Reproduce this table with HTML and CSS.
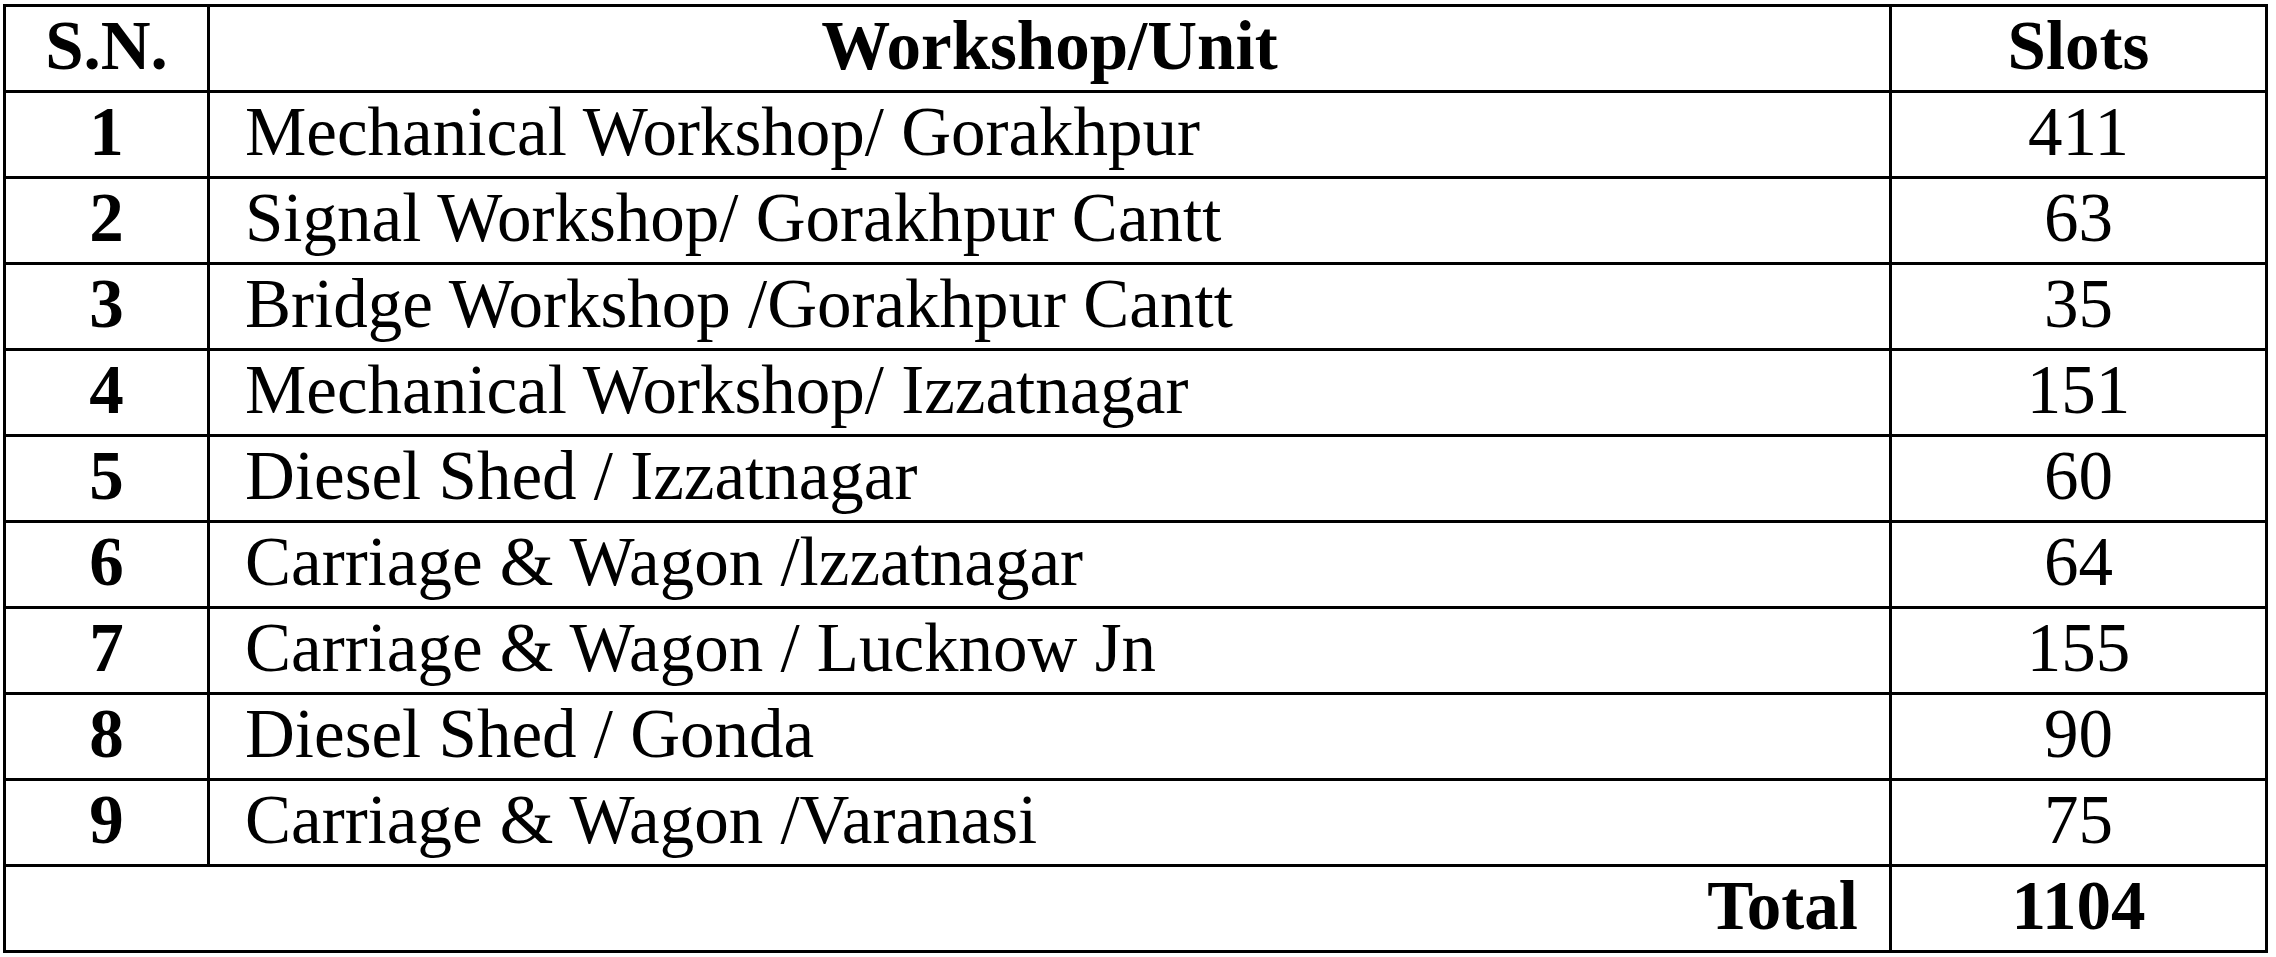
FILE: index.html
```html
<!DOCTYPE html>
<html>
<head>
<meta charset="utf-8">
<link rel="stylesheet" href="styles.css">
</head>
<body>
<table class="slots">
  <colgroup>
    <col class="c-sn">
    <col class="c-unit">
    <col class="c-slots">
  </colgroup>
  <thead>
    <tr>
      <th>S.N.</th>
      <th>Workshop/Unit</th>
      <th>Slots</th>
    </tr>
  </thead>
  <tbody>
    <tr><td class="sn">1</td><td class="unit">Mechanical Workshop/ Gorakhpur</td><td class="num">411</td></tr>
    <tr><td class="sn">2</td><td class="unit">Signal Workshop/ Gorakhpur Cantt</td><td class="num">63</td></tr>
    <tr><td class="sn">3</td><td class="unit">Bridge Workshop /Gorakhpur Cantt</td><td class="num">35</td></tr>
    <tr><td class="sn">4</td><td class="unit">Mechanical Workshop/ Izzatnagar</td><td class="num">151</td></tr>
    <tr><td class="sn">5</td><td class="unit">Diesel Shed / Izzatnagar</td><td class="num">60</td></tr>
    <tr><td class="sn">6</td><td class="unit">Carriage &amp; Wagon /lzzatnagar</td><td class="num">64</td></tr>
    <tr><td class="sn">7</td><td class="unit">Carriage &amp; Wagon / Lucknow Jn</td><td class="num">155</td></tr>
    <tr><td class="sn">8</td><td class="unit">Diesel Shed / Gonda</td><td class="num">90</td></tr>
    <tr><td class="sn">9</td><td class="unit">Carriage &amp; Wagon /Varanasi</td><td class="num">75</td></tr>
    <tr class="total"><td class="total-label" colspan="2">Total</td><td class="num total-num">1104</td></tr>
  </tbody>
</table>
</body>
</html>
```

FILE: styles.css
```css
html, body {
  margin: 0;
  padding: 0;
  background: #ffffff;
}

body {
  padding: 4px 0 0 3px;
  font-family: "Liberation Serif", "Times New Roman", serif;
  color: #000000;
}

.slots {
  border-collapse: collapse;
  table-layout: fixed;
  width: 2262px;
  font-size: 69px;
}

.c-sn { width: 204px; }
.c-unit { width: 1682px; }
.c-slots { width: 376px; }

.slots th,
.slots td {
  border: 3px solid #000000;
  height: 86px;
  padding: 0 0 6px 0;
  box-sizing: border-box;
  vertical-align: middle;
  line-height: 72px;
  white-space: nowrap;
  overflow: hidden;
}

.slots th {
  font-weight: bold;
  text-align: center;
}

.sn {
  font-weight: bold;
  text-align: center;
}

.unit {
  text-align: left;
  padding-left: 35px !important;
}

.num {
  text-align: center;
}

.total-label {
  font-weight: bold;
  text-align: right;
  padding-right: 31px !important;
}

.total-num {
  font-weight: bold;
}
```
